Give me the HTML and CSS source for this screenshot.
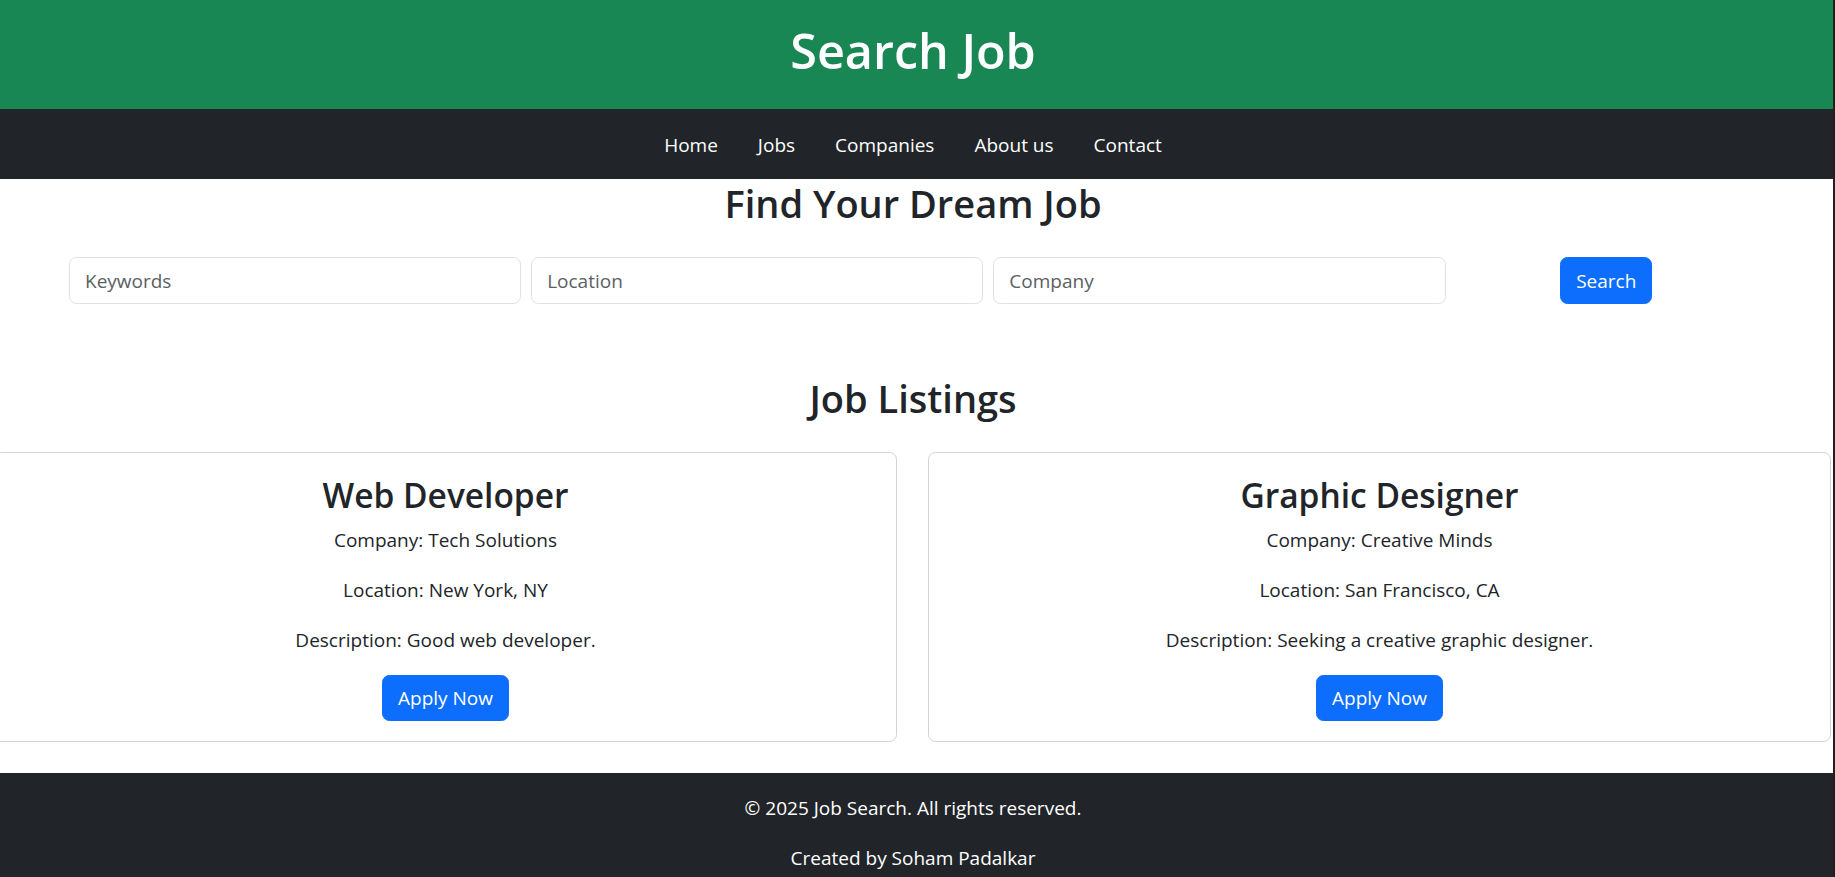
FILE: index.html
```html
<!DOCTYPE html>
<html lang="en">
<head>
<meta charset="utf-8">
<title>Search Job</title>
<link rel="stylesheet" href="styles.css">
</head>
<body>
<header class="site-header">
  <h1 class="site-title">Search Job</h1>
</header>
<nav class="site-nav">
  <a class="nav-link" href="#">Home</a>
  <a class="nav-link" href="#">Jobs</a>
  <a class="nav-link" href="#">Companies</a>
  <a class="nav-link" href="#">About us</a>
  <a class="nav-link" href="#">Contact</a>
</nav>
<main class="content">
  <section class="search">
    <h2 class="section-title">Find Your Dream Job</h2>
    <form class="search-form">
      <input class="field" type="text" placeholder="Keywords">
      <input class="field" type="text" placeholder="Location">
      <input class="field" type="text" placeholder="Company">
      <button class="btn btn-search" type="button">Search</button>
    </form>
  </section>
  <section class="listings">
    <h2 class="section-title">Job Listings</h2>
    <div class="cards">
      <div class="card">
        <h3 class="card-title">Web Developer</h3>
        <p class="card-text">Company: Tech Solutions</p>
        <p class="card-text">Location: New York, NY</p>
        <p class="card-text">Description: Good web developer.</p>
        <button class="btn btn-apply" type="button">Apply Now</button>
      </div>
      <div class="card">
        <h3 class="card-title">Graphic Designer</h3>
        <p class="card-text">Company: Creative Minds</p>
        <p class="card-text">Location: San Francisco, CA</p>
        <p class="card-text">Description: Seeking a creative graphic designer.</p>
        <button class="btn btn-apply" type="button">Apply Now</button>
      </div>
    </div>
  </section>
</main>
<footer class="site-footer">
  <p class="footer-text">© 2025 Job Search. All rights reserved.</p>
  <p class="footer-text">Created by Soham Padalkar</p>
</footer>
</body>
</html>
```
FILE: styles.css
```css
html {
  background: #1f1f1f;
}
body {
  margin: 0 2px 0 0;
  background: #ffffff;
  color: #212529;
  font-family: "Open Sans", "Noto Sans", sans-serif;
  font-size: 19px;
  line-height: 30px;
  overflow-x: hidden;
  min-height: 877px;
}
.site-header {
  background: #198754;
  padding: 20px 7px 20px 0;
  height: 109px;
  box-sizing: border-box;
  text-align: center;
}
.site-title {
  margin: 0;
  font-size: 48.5px;
  line-height: 60px;
  font-weight: 600;
  color: #ffffff;
}
.site-nav {
  background: #212529;
  height: 70px;
  padding: 1px 7px 0 0;
  box-sizing: border-box;
  display: flex;
  justify-content: center;
  align-items: center;
}
.nav-link {
  color: #ffffff;
  text-decoration: none;
  padding: 0 20px;
  line-height: 30px;
}
.content {
  padding: 0 7px 31px 0;
}
.section-title {
  margin: 0;
  font-size: 38px;
  line-height: 48px;
  font-weight: 600;
  text-align: center;
}
.search-form {
  width: 1688px;
  margin: 30px auto 0;
  display: grid;
  grid-template-columns: 3fr 3fr 3fr 2fr;
  column-gap: 10px;
  align-items: center;
}
.field {
  box-sizing: border-box;
  height: 47px;
  width: 100%;
  border: 1px solid #dee2e6;
  border-radius: 7.5px;
  padding: 0 15px;
  font-family: inherit;
  font-size: 19px;
  color: #212529;
  background: #ffffff;
}
.field::placeholder {
  color: #5c6064;
  opacity: 1;
}
.btn {
  box-sizing: border-box;
  height: 47px;
  border: 1px solid #0d6efd;
  border-radius: 7.5px;
  background: #0d6efd;
  color: #ffffff;
  font-family: inherit;
  font-size: 19px;
  line-height: 30px;
  padding: 0 15px;
}
.btn-search {
  justify-self: center;
}
.listings {
  margin-top: 70px;
}
.cards {
  display: flex;
  gap: 31px;
  margin: 30px 0 0 -6px;
}
.card {
  flex: 0 0 903px;
  box-sizing: border-box;
  height: 290px;
  border: 1px solid #d3d3d3;
  border-radius: 7.5px;
  padding: 21px 20px 20px;
  text-align: center;
}
.card-title {
  margin: 0 0 9px;
  font-size: 33.5px;
  line-height: 42px;
  font-weight: 600;
}
.card-text {
  margin: 0 0 20px;
}
.btn-apply {
  height: 46px;
}
.site-footer {
  background: #212529;
  color: #ffffff;
  text-align: center;
  padding: 20px 7px 0 0;
  height: 104px;
}
.footer-text {
  margin: 0 0 20px;
}
```
